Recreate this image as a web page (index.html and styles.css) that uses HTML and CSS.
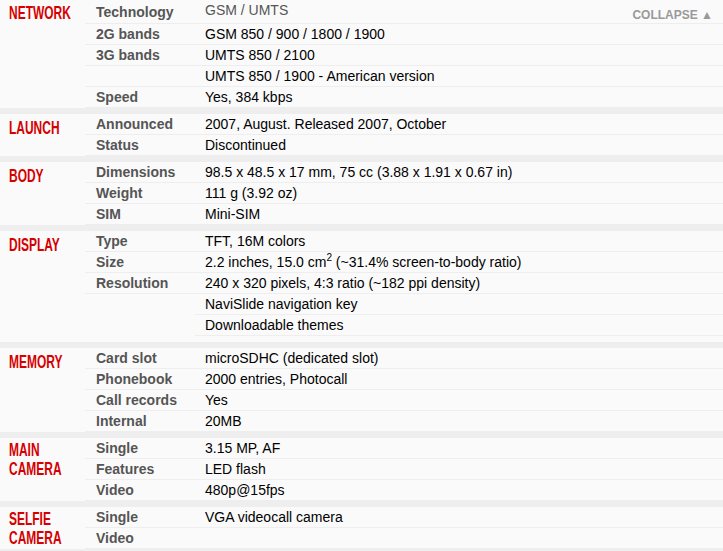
FILE: index.html
```html
<!DOCTYPE html>
<html>
  <head>
    <meta name="viewport" content="width=device-width, initial-scale=1.0" />
    <link rel="stylesheet" href="styles.css">
  </head>
  <body>
    <div class="specs-list">
      <table class="spec-table first">
        <colgroup><col class="c-head" /><col class="c-ttl" /><col /></colgroup>
        <tr class="top-row">
          <th rowspan="5"><span class="head">Network</span></th>
          <td class="ttl">Technology</td>
          <td class="nfo">
            <a class="collapse" href="#">COLLAPSE <span class="arrow">&#9650;</span></a>
            <a class="link" href="#">GSM / UMTS</a>
          </td>
        </tr>
        <tr><td class="ttl">2G bands</td><td class="nfo">GSM 850 / 900 / 1800 / 1900</td></tr>
        <tr><td class="ttl">3G bands</td><td class="nfo">UMTS 850 / 2100</td></tr>
        <tr><td class="ttl"></td><td class="nfo">UMTS 850 / 1900 - American version</td></tr>
        <tr><td class="ttl">Speed</td><td class="nfo">Yes, 384 kbps</td></tr>
      </table>

      <table class="spec-table">
        <colgroup><col class="c-head" /><col class="c-ttl" /><col /></colgroup>
        <tr>
          <th rowspan="2"><span class="head">Launch</span></th>
          <td class="ttl">Announced</td>
          <td class="nfo">2007, August. Released 2007, October</td>
        </tr>
        <tr><td class="ttl">Status</td><td class="nfo">Discontinued</td></tr>
      </table>

      <table class="spec-table">
        <colgroup><col class="c-head" /><col class="c-ttl" /><col /></colgroup>
        <tr>
          <th rowspan="3"><span class="head">Body</span></th>
          <td class="ttl">Dimensions</td>
          <td class="nfo">98.5 x 48.5 x 17 mm, 75 cc (3.88 x 1.91 x 0.67 in)</td>
        </tr>
        <tr><td class="ttl">Weight</td><td class="nfo">111 g (3.92 oz)</td></tr>
        <tr><td class="ttl">SIM</td><td class="nfo">Mini-SIM</td></tr>
      </table>

      <table class="spec-table">
        <colgroup><col class="c-head" /><col class="c-ttl" /><col /></colgroup>
        <tr>
          <th rowspan="6"><span class="head">Display</span></th>
          <td class="ttl">Type</td>
          <td class="nfo">TFT, 16M colors</td>
        </tr>
        <tr><td class="ttl">Size</td><td class="nfo">2.2 inches, 15.0 cm<sup>2</sup> (~31.4% screen-to-body ratio)</td></tr>
        <tr><td class="ttl">Resolution</td><td class="nfo">240 x 320 pixels, 4:3 ratio (~182 ppi density)</td></tr>
        <tr><td class="ttl blank" rowspan="2"></td><td class="nfo">NaviSlide navigation key</td></tr>
        <tr><td class="nfo">Downloadable themes</td></tr>
        <tr class="gap"><td colspan="2"></td></tr>
      </table>

      <table class="spec-table">
        <colgroup><col class="c-head" /><col class="c-ttl" /><col /></colgroup>
        <tr>
          <th rowspan="4"><span class="head">Memory</span></th>
          <td class="ttl">Card slot</td>
          <td class="nfo">microSDHC (dedicated slot)</td>
        </tr>
        <tr><td class="ttl">Phonebook</td><td class="nfo">2000 entries, Photocall</td></tr>
        <tr><td class="ttl">Call records</td><td class="nfo">Yes</td></tr>
        <tr><td class="ttl">Internal</td><td class="nfo">20MB</td></tr>
      </table>

      <table class="spec-table">
        <colgroup><col class="c-head" /><col class="c-ttl" /><col /></colgroup>
        <tr>
          <th rowspan="3" class="two-lines"><span class="head">Main<br />Camera</span></th>
          <td class="ttl">Single</td>
          <td class="nfo">3.15 MP, AF</td>
        </tr>
        <tr><td class="ttl">Features</td><td class="nfo">LED flash</td></tr>
        <tr><td class="ttl">Video</td><td class="nfo">480p@15fps</td></tr>
      </table>

      <table class="spec-table">
        <colgroup><col class="c-head" /><col class="c-ttl" /><col /></colgroup>
        <tr>
          <th rowspan="2" class="two-lines"><span class="head">Selfie<br />Camera</span></th>
          <td class="ttl">Single</td>
          <td class="nfo">VGA videocall camera</td>
        </tr>
        <tr><td class="ttl">Video</td><td class="nfo"></td></tr>
      </table>
    </div>
  </body>
</html>
```

FILE: styles.css
```css
body {
  margin: 0;
  background: #fafafa;
  color: #000;
  font-family: "Liberation Sans", Arial, sans-serif;
  font-size: 14px;
}
.specs-list {
  margin-top: -6px;
}
.spec-table {
  width: 100%;
  table-layout: fixed;
  border-collapse: separate;
  border-spacing: 0;
  border-bottom: 6px solid #eee;
}
.c-head {
  width: 85px;
}
.c-ttl {
  width: 110px;
}
.spec-table th {
  vertical-align: top;
  text-align: left;
  padding: 5px 0 0 9px;
  font-weight: normal;
  white-space: nowrap;
}
.spec-table th.two-lines {
  padding-top: 3px;
}
.head {
  display: inline-block;
  color: #d50000;
  font-size: 19px;
  font-weight: bold;
  line-height: 18.5px;
  text-transform: uppercase;
  transform: scaleX(0.63);
  transform-origin: left top;
}
.spec-table td {
  height: 20px;
  padding: 0;
  line-height: 20px;
  border-bottom: 1px solid #eee;
  white-space: nowrap;
}
.spec-table td.ttl {
  padding-left: 11px;
  color: #555;
  font-weight: bold;
}
.spec-table td.nfo {
  padding: 0 10px;
}
.spec-table td.blank {
  border-bottom: none;
}
.top-row th {
  padding-top: 10px;
}
.top-row td {
  padding-top: 6px !important;
}
.gap td {
  height: 6px;
  line-height: 6px;
  border-bottom: none;
}
.link {
  color: #555;
  text-decoration: none;
}
.collapse {
  float: right;
  position: relative;
  top: 2px;
  margin-top: 3px;
  color: #999;
  font-size: 12px;
  font-weight: bold;
  text-decoration: none;
}
.arrow {
  font-size: 12px;
}
sup {
  font-size: 10px;
  line-height: 0;
}
```
